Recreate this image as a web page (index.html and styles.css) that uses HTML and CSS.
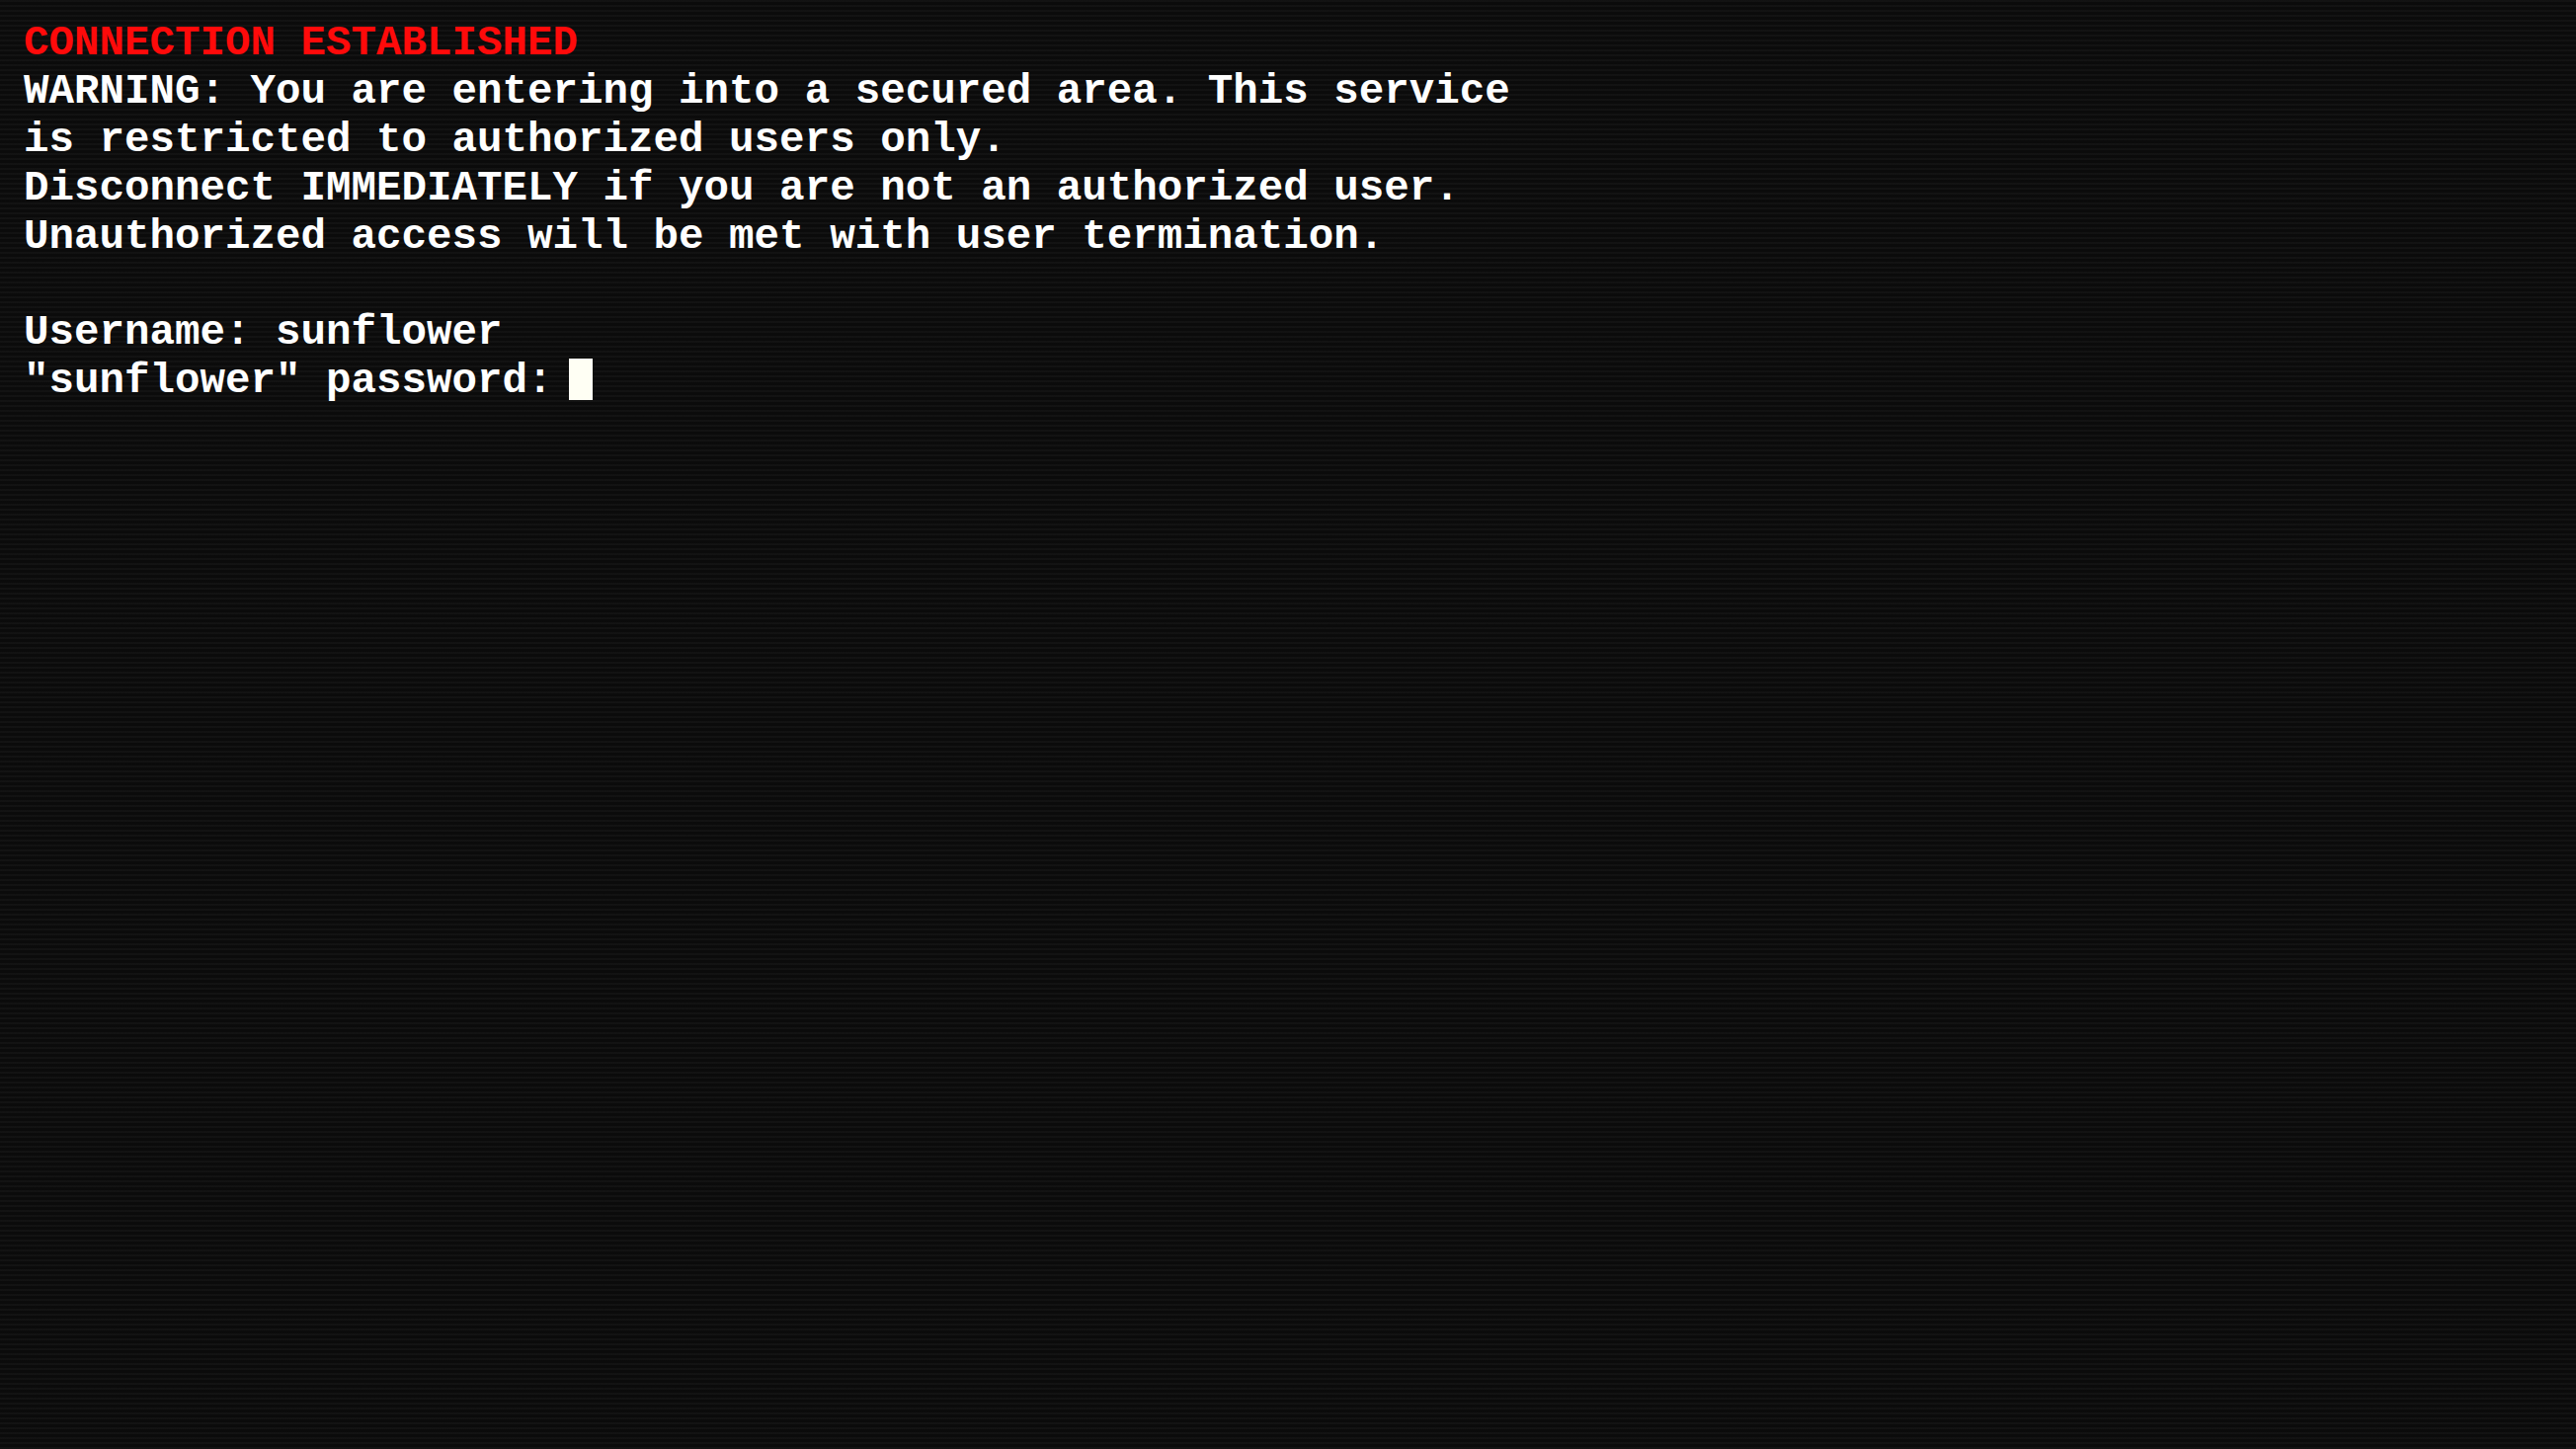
FILE: index.html
```html
<!DOCTYPE html>
<html lang="en">
<head>
<meta charset="utf-8">
<title>Terminal</title>
<link rel="stylesheet" href="styles.css">
</head>
<body>
<main class="screen">
  <div class="terminal">
    <div class="line alert">CONNECTION ESTABLISHED</div>
    <div class="line">WARNING: You are entering into a secured area. This service</div>
    <div class="line">is restricted to authorized users only.</div>
    <div class="line">Disconnect IMMEDIATELY if you are not an authorized user.</div>
    <div class="line">Unauthorized access will be met with user termination.</div>
    <div class="line blank"></div>
    <div class="line">Username: sunflower</div>
    <div class="line">"sunflower" password:<span class="cursor"></span></div>
  </div>
</main>
</body>
</html>
```
FILE: styles.css
```css
html, body {
  margin: 0;
  padding: 0;
  height: 100%;
  background: #0b0b0b;
}

.screen {
  width: 100%;
  height: 100%;
  box-sizing: border-box;
  padding: 20px 24px;
  background-color: #0b0b0b;
  background-image: repeating-linear-gradient(
    to bottom,
    rgba(255, 255, 255, 0.03) 0px,
    rgba(255, 255, 255, 0.03) 2px,
    rgba(0, 0, 0, 0) 2px,
    rgba(0, 0, 0, 0) 5px
  );
  overflow: hidden;
}

.terminal {
  font-family: "Liberation Mono", "DejaVu Sans Mono", monospace;
  font-size: 42.5px;
  font-weight: bold;
  line-height: 48.9px;
  color: #ffffff;
  letter-spacing: 0;
}

.line {
  height: 48.9px;
  white-space: pre;
}

.alert {
  color: #ff0a0a;
}

.cursor {
  display: inline-block;
  width: 24px;
  height: 42px;
  margin-left: 16px;
  background: #fffff4;
  vertical-align: -8px;
}
```
